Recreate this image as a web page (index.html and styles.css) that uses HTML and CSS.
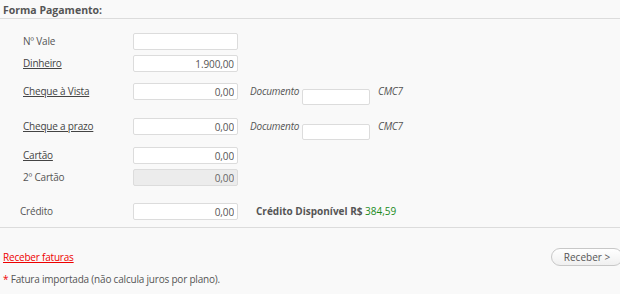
FILE: index.html
```html
<!DOCTYPE html>
<html lang="pt">
<head>
<meta charset="utf-8">
<link rel="stylesheet" href="styles.css">
</head>
<body>
<div class="page">
  <div class="title">Forma Pagamento:</div>
  <div class="form">
    <div class="row r-vale">
      <span class="label">Nº Vale</span>
      <input class="field" type="text" value="">
    </div>
    <div class="row r-din">
      <a class="label link" href="#">Dinheiro</a>
      <input class="field" type="text" value="1.900,00">
    </div>
    <div class="row r-chv">
      <a class="label link" href="#">Cheque à Vista</a>
      <input class="field" type="text" value="0,00">
      <span class="doc">Documento</span><input class="docfield" type="text" value=""><span class="cmc">CMC7</span>
    </div>
    <div class="row r-chp">
      <a class="label link" href="#">Cheque a prazo</a>
      <input class="field" type="text" value="0,00">
      <span class="doc">Documento</span><input class="docfield" type="text" value=""><span class="cmc">CMC7</span>
    </div>
    <div class="row r-cart">
      <a class="label link" href="#">Cartão</a>
      <input class="field" type="text" value="0,00">
    </div>
    <div class="row r-cart2">
      <span class="label">2º Cartão</span>
      <input class="field disabled" type="text" value="0,00" disabled>
    </div>
    <div class="row r-cred">
      <span class="label label-cred">Crédito</span>
      <input class="field" type="text" value="0,00">
      <span class="credit">Crédito Disponível R$ <span class="amount">384,59</span></span>
    </div>
  </div>
  <div class="footer">
    <div class="actions">
      <a class="invoices" href="#">Receber faturas</a>
      <button class="btn" type="button">Receber &gt;</button>
    </div>
    <div class="note"><span class="star">*</span> Fatura importada (não calcula juros por plano).</div>
  </div>
</div>
</body>
</html>
```
FILE: styles.css
```css
html, body {
  margin: 0;
  padding: 0;
  background: #f9f9f9;
}
body {
  font-family: "Open Sans", "Noto Sans", sans-serif;
  font-size: 10px;
  letter-spacing: -0.2px;
  color: #555;
  width: 620px;
  height: 294px;
  overflow: hidden;
}
.page {
  width: 620px;
}
.title {
  font-weight: bold;
  font-size: 10.5px;
  letter-spacing: 0;
  color: #555;
  padding: 2px 0 0 3px;
  height: 16px;
  line-height: 16px;
  border-bottom: 1px solid #dcdcdc;
}
.form {
  padding-bottom: 7px;
  border-bottom: 1px solid #dcdcdc;
}
.row {
  display: flex;
  align-items: flex-start;
  height: 17px;
  line-height: 17px;
}
.r-vale { margin-top: 14px; }
.r-din { margin-top: 5px; }
.r-chv { margin-top: 11px; }
.r-chp { margin-top: 18px; }
.r-cart { margin-top: 12px; }
.r-cart2 { margin-top: 5px; }
.r-cred { margin-top: 17px; }
.label {
  width: 110px;
  padding-left: 23px;
  color: #555;
}
.label-cred {
  padding-left: 20px;
  width: 113px;
}
.link {
  color: #444;
  text-decoration: underline;
}
.field {
  box-sizing: border-box;
  width: 105px;
  height: 17px;
  border: 1px solid #dcdcdc;
  border-radius: 2px;
  background: #fff;
  font-family: inherit;
  font-size: 10px;
  letter-spacing: -0.1px;
  color: #555;
  text-align: right;
  padding: 0 3px;
  margin: 0;
}
.field.disabled {
  background: #ececec;
  color: #666;
}
.doc {
  font-style: italic;
  color: #555;
  margin-left: 12px;
  width: 52px;
}
.docfield {
  box-sizing: border-box;
  width: 68px;
  height: 16px;
  margin: 6px 0 0 0;
  border: 1px solid #dcdcdc;
  border-radius: 2px;
  background: #fff;
  padding: 0;
}
.cmc {
  font-style: italic;
  color: #555;
  margin-left: 8px;
}
.credit {
  margin-left: 18px;
  font-weight: bold;
  letter-spacing: 0;
  color: #555;
}
.amount {
  font-weight: normal;
  color: #1a8a1a;
}
.footer {
  padding: 20px 0 0 3px;
}
.actions {
  display: flex;
  justify-content: space-between;
  align-items: center;
  height: 18px;
}
.invoices {
  color: #e00;
  text-decoration: underline;
}
.btn {
  box-sizing: border-box;
  width: 72px;
  height: 18px;
  margin-right: -3px;
  border: 1px solid #c8c8c8;
  border-radius: 9px;
  background: linear-gradient(#ffffff, #f0f0f0);
  font-family: inherit;
  font-size: 10px;
  color: #555;
  padding: 0;
}
.note {
  margin-top: 6px;
  color: #555;
}
.star {
  color: #e00;
}
```
